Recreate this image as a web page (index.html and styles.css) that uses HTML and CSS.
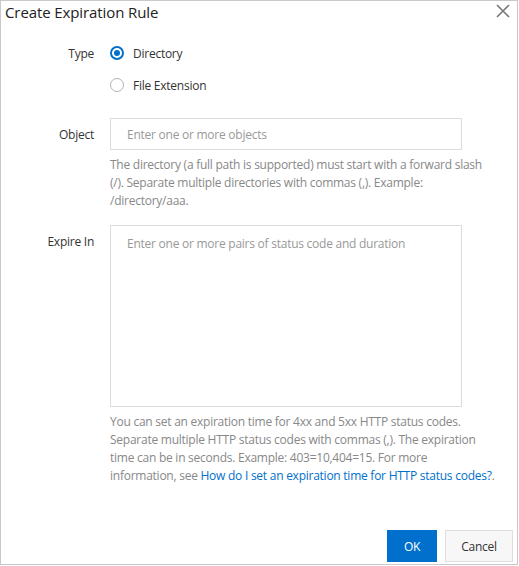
FILE: index.html
```html
<!DOCTYPE html>
<html lang="en">
<head>
<meta charset="utf-8">
<title>Create Expiration Rule</title>
<link rel="stylesheet" href="styles.css">
</head>
<body>
<div class="dialog">
  <div class="header">
    <h1 class="title">Create Expiration Rule</h1>
    <button class="close" aria-label="Close">
      <svg width="14" height="14" viewBox="0 0 14 14"><path d="M1 1 L13 13 M13 1 L1 13" stroke="#777" stroke-width="1.6" fill="none"/></svg>
    </button>
  </div>
  <div class="body">
    <div class="row">
      <div class="label">Type</div>
      <div class="field">
        <div class="radio-group">
          <label class="radio"><span class="dot checked"></span><span>Directory</span></label>
          <label class="radio"><span class="dot"></span><span>File Extension</span></label>
        </div>
      </div>
    </div>
    <div class="row row-object">
      <div class="label label-input">Object</div>
      <div class="field">
        <div class="input"><span class="placeholder">Enter one or more objects</span></div>
        <p class="help">The directory (a full path is supported) must start with a forward slash (/). Separate multiple directories with commas (,). Example: /directory/aaa.</p>
      </div>
    </div>
    <div class="row row-expire">
      <div class="label label-input">Expire In</div>
      <div class="field">
        <div class="textarea"><span class="placeholder">Enter one or more pairs of status code and duration</span></div>
        <p class="help">You can set an expiration time for 4xx and 5xx HTTP status codes. Separate multiple HTTP status codes with commas (,). The expiration time can be in seconds. Example: 403=10,404=15. For more information, see <a class="link" href="#">How do I set an expiration time for HTTP status codes?</a>.</p>
      </div>
    </div>
  </div>
  <div class="footer">
    <button class="btn btn-primary">OK</button>
    <button class="btn btn-normal">Cancel</button>
  </div>
</div>
</body>
</html>
```
FILE: styles.css
```css
* { box-sizing: border-box; }
html, body { margin: 0; padding: 0; background: #fff; }
body {
  font-family: "Open Sans", "Noto Sans", "Liberation Sans", sans-serif;
  font-size: 12px;
  letter-spacing: -0.25px;
  color: #333;
}
.dialog {
  width: 518px;
  height: 565px;
  border: 1px solid #c9c9c9;
  display: flex;
  flex-direction: column;
  background: #fff;
}
.header {
  display: flex;
  justify-content: space-between;
  align-items: flex-start;
  padding: 0 4px 0 4px;
  height: 36px;
}
.title {
  margin: 0;
  font-size: 15px;
  font-weight: 400;
  letter-spacing: -0.1px;
  line-height: 23px;
  color: #222;
}
.close {
  border: 0;
  background: none;
  padding: 0;
  margin-top: 3px;
  margin-right: 3px;
  width: 14px;
  height: 14px;
  cursor: pointer;
}
.close svg { display: block; }
.body {
  flex: 1;
  display: flex;
  flex-direction: column;
}
.row {
  display: flex;
  gap: 16px;
}
.label {
  width: 93px;
  flex-shrink: 0;
  text-align: right;
  line-height: 33px;
  color: #333;
}
.field {
  width: 386px;
}
.radio-group {
  display: flex;
  flex-direction: column;
}
.radio {
  display: flex;
  align-items: center;
  gap: 9px;
  height: 32px;
  line-height: 33px;
  color: #333;
}
.dot {
  width: 14px;
  height: 14px;
  border-radius: 50%;
  border: 1px solid #b3b3b3;
  background: #fff;
  position: relative;
}
.dot.checked {
  border: 2px solid #0070cc;
}
.dot.checked::after {
  content: "";
  position: absolute;
  left: 2px;
  top: 2px;
  width: 6px;
  height: 6px;
  border-radius: 50%;
  background: #0070cc;
}
.row-object { margin-top: 17px; }
.row-expire { margin-top: 15px; }
.input, .textarea {
  width: 352px;
  border: 1px solid #dcdcdc;
  background: #fff;
  padding: 0 16px;
}
.input {
  height: 32px;
  line-height: 31px;
}
.textarea {
  height: 182px;
  padding-top: 9px;
  line-height: 18px;
}
.placeholder { color: #999; }
.help {
  margin: 5px 0 0 0;
  line-height: 18px;
  padding-top: 1px;
  color: #888;
}
.link {
  color: #0070cc;
  text-decoration: none;
}
.footer {
  display: flex;
  justify-content: flex-end;
  gap: 8px;
  padding: 0 4px 2px 0;
}
.btn {
  font-family: inherit;
  font-size: 12px;
  letter-spacing: -0.25px;
  height: 32px;
  padding: 0 16px;
  cursor: pointer;
}
.btn-primary {
  width: 50px;
  padding: 0;
  background: #0070cc;
  border: 1px solid #0070cc;
  color: #fff;
}
.btn-normal {
  width: 68px;
  padding: 0;
  background: #f7f7f7;
  border: 1px solid #dedede;
  color: #333;
}
```
